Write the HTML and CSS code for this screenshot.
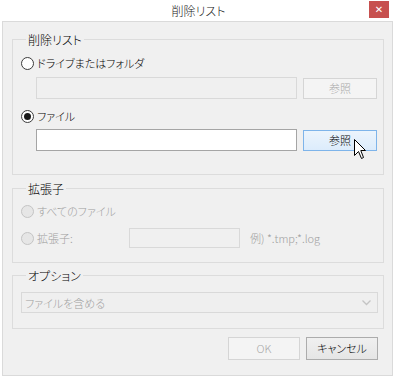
FILE: index.html
```html
<!DOCTYPE html>
<html lang="ja">
<head>
<meta charset="utf-8">
<link rel="stylesheet" href="styles.css">
</head>
<body>
<div class="window">
  <div class="titlebar">
    <span></span>
    <span class="title">削除リスト</span>
    <span class="close">✕</span>
  </div>
  <div class="frame">
    <fieldset class="group g1">
      <legend>削除リスト</legend>
      <label class="radio"><span class="dot"></span><span>ドライブまたはフォルダ</span></label>
      <div class="pathrow">
        <div class="textbox disabled"></div>
        <div class="btn disabled">参照</div>
      </div>
      <label class="radio checked"><span class="dot"></span><span>ファイル</span></label>
      <div class="pathrow">
        <div class="textbox"></div>
        <div class="btn hover">参照
          <svg class="cursor" width="13" height="21" viewBox="0 0 13 21"><path d="M0.5 0.5 L0.5 16.5 L4.5 12.5 L7.5 19.5 L9.5 18.5 L6.8 11.5 L11.5 11.5 Z" fill="#fff" stroke="#000" stroke-width="1" stroke-linejoin="miter"/></svg>
        </div>
      </div>
    </fieldset>
    <fieldset class="group g2">
      <legend>拡張子</legend>
      <label class="radio disabled"><span class="dot"></span><span>すべてのファイル</span></label>
      <div class="extrow">
        <label class="radio disabled extlabel"><span class="dot"></span><span>拡張子:</span></label>
        <div class="textbox disabled ext"></div>
        <span class="hint">例) *.tmp;*.log</span>
      </div>
    </fieldset>
    <fieldset class="group g3">
      <legend>オプション</legend>
      <div class="combo">
        <span>ファイルを含める</span>
        <svg width="9" height="6" viewBox="0 0 9 6"><path d="M0.5 0.5 L4.5 4.5 L8.5 0.5" fill="none" stroke="#c4c4c4" stroke-width="1.3"/></svg>
      </div>
    </fieldset>
    <div class="buttons">
      <div class="btn disabled big">OK</div>
      <div class="btn normal big">キャンセル</div>
    </div>
  </div>
</div>
</body>
</html>
```

FILE: styles.css
```css
* { box-sizing: border-box; }
html, body {
  margin: 0;
  padding: 0;
  background: #ffffff;
}
body {
  width: 396px;
  height: 379px;
  overflow: hidden;
  font-family: "Noto Sans CJK JP", "Noto Sans", sans-serif;
  font-size: 11px;
  font-weight: 300;
  font-feature-settings: "palt";
  color: #000;
}
.window {
  width: 396px;
  height: 379px;
}
.titlebar {
  height: 21px;
  display: grid;
  grid-template-columns: 1fr auto 1fr;
  align-items: start;
}
.title {
  line-height: 21px;
  font-size: 12px;
  color: #222;
  padding-left: 1px;
}
.close {
  justify-self: end;
  margin-top: 1px;
  margin-right: 7px;
  width: 20px;
  height: 17px;
  background: #c7504f;
  color: #fff;
  font-family: "DejaVu Sans", sans-serif;
  font-size: 10px;
  font-weight: bold;
  line-height: 17px;
  text-align: center;
}
.frame {
  margin: 0 3px 0 2px;
  height: 355px;
  border: 1px solid #dadada;
  background: #f0f0f0;
  padding: 10px 8px 0 9px;
  display: flex;
  flex-direction: column;
}
.group {
  margin: 0;
  border: 1px solid #dcdcdc;
  padding: 0 5px 0 8px;
  min-width: 0;
}
.group legend {
  padding: 0 2px;
  margin-left: 5px;
  line-height: 15px;
  height: 15px;
  font-size: 12px;
}
.g1 { padding-top: 8px; padding-bottom: 23px; }
.g2 { margin-top: 6px; padding-top: 7px; padding-bottom: 14px; }
.g3 { margin-top: 5px; padding-top: 9px; padding-bottom: 15px; }

.radio {
  display: flex;
  align-items: center;
  height: 16px;
  gap: 3px;
}
.radio .dot {
  width: 13px;
  height: 13px;
  border-radius: 50%;
  border: 1px solid #3c3c3c;
  background: #fff;
  display: flex;
  align-items: center;
  justify-content: center;
}
.radio.checked .dot::after {
  content: "";
  width: 7px;
  height: 7px;
  border-radius: 50%;
  background: #1a1a1a;
}
.radio.disabled { color: #a0a0a0; }
.radio.disabled .dot {
  border-color: #c4c4c4;
  background: #e6e6e6;
}
.pathrow {
  display: flex;
  align-items: center;
  gap: 6px;
  margin-left: 15px;
  margin-top: 6px;
  margin-bottom: 9px;
}
.pathrow:last-child { margin-top: 5px; margin-bottom: 0; }
.textbox {
  width: 261px;
  height: 22px;
  background: #fff;
  border: 1px solid #a5a5a5;
}
.textbox.disabled {
  background: #f0f0f0;
  border-color: #d9d9d9;
}
.btn {
  position: relative;
  width: 74px;
  height: 21px;
  display: flex;
  align-items: center;
  justify-content: center;
  border: 1px solid #acacac;
  background: linear-gradient(#f0f0f0, #e5e5e5);
  line-height: 1;
}
.btn.disabled {
  color: #a8a8a8;
  background: #f4f4f4;
  border-color: #d5d5d5;
}
.btn.hover {
  background: linear-gradient(#ecf4fc, #dcecfc);
  border-color: #7eb4ea;
}
.cursor {
  position: absolute;
  left: 50px;
  top: 8px;
}
.extrow {
  display: flex;
  align-items: center;
  margin-top: 9px;
}
.extlabel { width: 108px; }
.textbox.ext {
  width: 111px;
  height: 20px;
}
.hint {
  margin-left: 10px;
  color: #a0a0a0;
}
.combo {
  height: 21px;
  border: 1px solid #d9d9d9;
  background: #efefef;
  color: #a0a0a0;
  display: flex;
  align-items: center;
  justify-content: space-between;
  padding: 0 6px 0 3px;
}
.buttons {
  display: flex;
  justify-content: flex-end;
  gap: 6px;
  margin-top: 8px;
  padding-right: 6px;
}
.btn.big {
  width: 72px;
  height: 23px;
}
.btn.normal { border-color: #acacac; }
```
